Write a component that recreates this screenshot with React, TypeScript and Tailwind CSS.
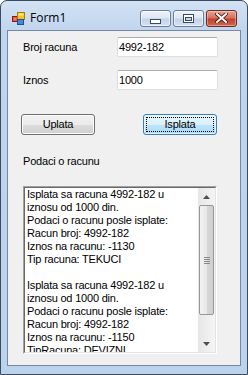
import React from "react";

const font = { fontFamily: '"Liberation Sans", Arial, sans-serif' };

function AppIcon() {
  return (
    <svg width="13" height="13" viewBox="0 0 13 13">
      <rect x="0.5" y="4.5" width="5" height="5" fill="#e0412d" stroke="#8a1c10" />
      <rect x="1.5" y="5.5" width="3" height="3" fill="#ff7a5a" />
      <rect x="5.5" y="0.5" width="7" height="7" fill="#f7c21c" stroke="#b07a05" />
      <rect x="6.5" y="1.5" width="5" height="2" fill="#ffe98a" />
      <rect x="5.5" y="7.5" width="6" height="5" fill="#4c86d8" stroke="#1e4f9a" />
    </svg>
  );
}

function CaptionButton({ kind }: { kind: "min" | "max" | "close" }) {
  if (kind === "close") {
    return (
      <div className="w-[31px] h-[17px] rounded-[3px] border border-[#6b2a22] flex items-center justify-center bg-[linear-gradient(to_bottom,#e8a394_0%,#d7715f_45%,#c2412c_55%,#cf6a4f_100%)] shadow-[inset_0_0_0_1px_rgba(255,255,255,0.35)]">
        <svg width="13" height="10" viewBox="0 0 13 10">
          <path d="M2 1 L11 9 M11 1 L2 9" stroke="#4a1a12" strokeWidth="3.6" strokeLinecap="square" />
          <path d="M2 1 L11 9 M11 1 L2 9" stroke="#ffffff" strokeWidth="2" strokeLinecap="square" />
        </svg>
      </div>
    );
  }
  return (
    <div className="w-[31px] h-[17px] rounded-[3px] border border-[#6c7d98] flex items-center justify-center bg-[linear-gradient(to_bottom,#eef3fa_0%,#dde7f4_45%,#c3d3e8_55%,#d2e0f1_100%)] shadow-[inset_0_0_0_1px_rgba(255,255,255,0.6)]">
      {kind === "min" ? (
        <svg width="11" height="12" viewBox="0 0 11 12">
          <rect x="0.5" y="7.5" width="10" height="4" fill="#ffffff" stroke="#3a4a60" />
        </svg>
      ) : (
        <svg width="11" height="9" viewBox="0 0 11 9">
          <rect x="0.5" y="0.5" width="10" height="8" fill="#ffffff" stroke="#3a4a60" />
          <rect x="2.5" y="3.5" width="6" height="3" fill="#c8d6e8" stroke="#3a4a60" />
        </svg>
      )}
    </div>
  );
}

function TextBox({ value }: { value: string }) {
  return (
    <div className="w-[101px] h-[20px] rounded-[2px] border border-[#dbdfe6] border-t-[#abadb3] bg-white flex items-center pl-[1px] text-[11px] tracking-[-0.2px] text-black leading-[13px]">
      {value}
    </div>
  );
}

const lines = [
  "Isplata sa racuna 4992-182 u",
  "iznosu od 1000 din.",
  "Podaci o racunu posle isplate:",
  "Racun broj: 4992-182",
  "Iznos na racunu: -1130",
  "Tip racuna: TEKUCI",
  "\u00a0",
  "Isplata sa racuna 4992-182 u",
  "iznosu od 1000 din.",
  "Podaci o racunu posle isplate:",
  "Racun broj: 4992-182",
  "Iznos na racunu: -1150",
  "TipRacuna: DEVIZNI",
];

function ScrollBar() {
  return (
    <div className="w-[17px] h-full flex flex-col bg-[linear-gradient(to_right,#e6e6e6,#f5f5f5)]">
      <div className="h-[17px] flex items-center justify-center">
        <svg width="7" height="4" viewBox="0 0 7 4">
          <path d="M3.5 0 L7 4 L0 4 Z" fill="#4f4f4f" />
        </svg>
      </div>
      <div className="h-[110px] mx-[1px] rounded-[2px] border border-[#979797] bg-[linear-gradient(to_right,#f3f3f3_0%,#e8e8e8_50%,#d7d7d7_51%,#d0d0d0_100%)] flex flex-col items-center justify-center gap-[1px]">
        <div className="w-[6px] h-[1px] bg-[#8a8a8a]" />
        <div className="w-[6px] h-[1px] bg-[#8a8a8a]" />
        <div className="w-[6px] h-[1px] bg-[#8a8a8a]" />
        <div className="w-[6px] h-[1px] bg-[#8a8a8a]" />
      </div>
      <div className="flex-1" />
      <div className="h-[17px] flex items-center justify-center">
        <svg width="7" height="4" viewBox="0 0 7 4">
          <path d="M0 0 L7 0 L3.5 4 Z" fill="#4f4f4f" />
        </svg>
      </div>
    </div>
  );
}

export default function App() {
  return (
    <div
      style={font}
      className="w-[248px] h-[375px] flex flex-col border border-[#3d4b5e] rounded-t-[7px] overflow-hidden bg-[#bfd4ee] bg-[linear-gradient(to_bottom,#d3e2f4_0px,#c0d5ee_30px,#bcd3ed_100%)]"
    >
      {/* Title bar */}
      <div className="h-[29px] shrink-0 pt-[8px] pl-[11px] pr-[10px]">
        <div className="h-[18px] flex items-center">
          <AppIcon />
          <span
            className="ml-[5px] text-[12px] text-black leading-[14px]"
            style={{ fontFamily: '"Open Sans", "Noto Sans", sans-serif' }}
          >
            Form1
          </span>
          <div className="ml-auto flex items-center gap-[2px]">
            <CaptionButton kind="min" />
            <CaptionButton kind="max" />
            <CaptionButton kind="close" />
          </div>
        </div>
      </div>
      {/* Client */}
      <div className="flex-1 mx-[6px] mb-[8px] border border-[#7288a6] bg-[#f0f0f0] flex flex-col text-[11px] tracking-[-0.2px] text-black leading-[13px]">
        <div className="mt-[6px] h-[20px] flex items-center pl-[15px]">
          <span className="w-[94px]">Broj racuna</span>
          <TextBox value="4992-182" />
        </div>
        <div className="mt-[13px] h-[20px] flex items-center pl-[15px]">
          <span className="w-[94px]">Iznos</span>
          <TextBox value="1000" />
        </div>
        <div className="mt-[24px] h-[21px] flex pl-[13px] gap-[48px]">
          <div className="w-[74px] h-[21px] rounded-[3px] border border-[#707070] shadow-[inset_0_0_0_1px_#fcfcfc] bg-[linear-gradient(to_bottom,#f2f2f2_0%,#ebebeb_50%,#dddddd_51%,#cfcfcf_100%)] flex items-center justify-center">
            Uplata
          </div>
          <div className="w-[74px] h-[21px] rounded-[3px] border border-[#3c7fb1] shadow-[inset_0_0_0_1px_#e6f5fd] bg-[linear-gradient(to_bottom,#eaf6fd_0%,#d9f0fc_50%,#bee6fd_51%,#a7d9f5_100%)] p-[2px]">
            <div className="w-full h-full border border-dotted border-black flex items-center justify-center">
              Isplata
            </div>
          </div>
        </div>
        <div className="mt-[20px] pl-[15px]">Podaci o racunu</div>
        <div className="mt-[18px] ml-[15px] w-[194px] h-[168px] border border-[#a0a0a0] border-r-white border-b-white">
          <div className="w-full h-full border border-[#696969] border-r-[#e3e3e3] border-b-[#e3e3e3] bg-white flex">
            <div className="flex-1 overflow-hidden pl-[2px] whitespace-nowrap">
              {lines.map((l, i) => (
                <div key={i} className="h-[13px]">
                  {l}
                </div>
              ))}
            </div>
            <ScrollBar />
          </div>
        </div>
      </div>
    </div>
  );
}
